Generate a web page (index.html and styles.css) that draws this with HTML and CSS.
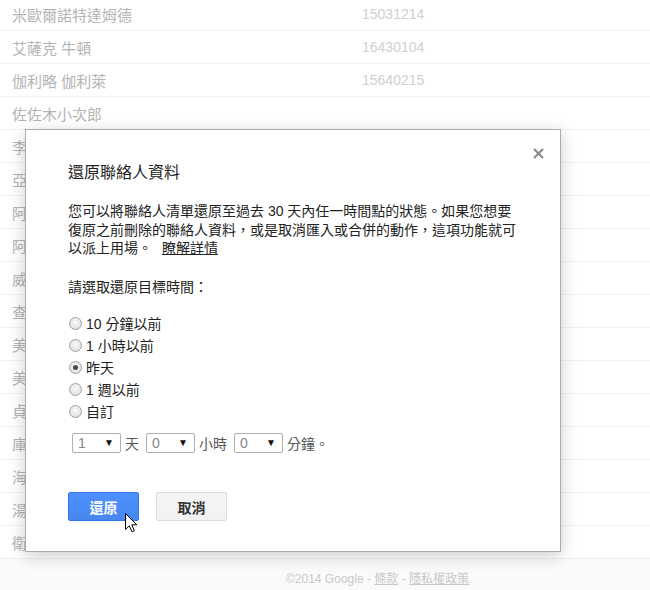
FILE: index.html
```html
<!DOCTYPE html>
<html lang="zh-Hant">
<head>
<meta charset="utf-8">
<title>還原聯絡人資料</title>
<link rel="stylesheet" href="styles.css">
</head>
<body>
<div class="page">
  <ul class="contacts">
    <li class="row"><span class="name">米歐爾諾特達姆德</span><span class="num">15031214</span></li>
    <li class="row"><span class="name">艾薩克 牛頓</span><span class="num">16430104</span></li>
    <li class="row"><span class="name">伽利略 伽利萊</span><span class="num">15640215</span></li>
    <li class="row"><span class="name">佐佐木小次郎</span><span class="num"></span></li>
    <li class="row"><span class="name">李奧納多 達文西</span><span class="num">14520415</span></li>
    <li class="row"><span class="name">亞里斯多德</span><span class="num"></span></li>
    <li class="row"><span class="name">阿基米德</span><span class="num"></span></li>
    <li class="row"><span class="name">阿爾伯特 愛因斯坦</span><span class="num">18790314</span></li>
    <li class="row"><span class="name">威廉 莎士比亞</span><span class="num">15640426</span></li>
    <li class="row"><span class="name">查爾斯 達爾文</span><span class="num">18090212</span></li>
    <li class="row"><span class="name">美空雲雀</span><span class="num">19370529</span></li>
    <li class="row"><span class="name">美智子</span><span class="num"></span></li>
    <li class="row"><span class="name">貞德</span><span class="num">14120106</span></li>
    <li class="row"><span class="name">庫克船長</span><span class="num">17281027</span></li>
    <li class="row"><span class="name">海倫 凱勒</span><span class="num">18800627</span></li>
    <li class="row"><span class="name">湯瑪斯 愛迪生</span><span class="num">18470211</span></li>
    <li class="row"><span class="name">衛斯理</span><span class="num"></span></li>
  </ul>
  <div class="footer">©2014 Google - <a href="#">條款</a> - <a href="#">隱私權政策</a></div>
</div>

<div class="dialog">
  <svg class="close" width="11" height="11" viewBox="0 0 11 11"><path d="M1 1 L10 10 M10 1 L1 10" stroke="#8c8c8c" stroke-width="2.2" fill="none"/></svg>
  <h1 class="title">還原聯絡人資料</h1>
  <p class="desc">您可以將聯絡人清單還原至過去 30 天內任一時間點的狀態。如果您想要復原之前刪除的聯絡人資料，或是取消匯入或合併的動作，這項功能就可以派上用場。 <a href="#" class="more">瞭解詳情</a></p>
  <p class="prompt">請選取還原目標時間：</p>
  <ul class="options">
    <li class="opt"><span class="radio"></span>10 分鐘以前</li>
    <li class="opt"><span class="radio"></span>1 小時以前</li>
    <li class="opt"><span class="radio checked"></span>昨天</li>
    <li class="opt"><span class="radio"></span>1 週以前</li>
    <li class="opt"><span class="radio"></span>自訂</li>
  </ul>
  <div class="custom">
    <div class="select"><span>1</span><span class="arrow">▼</span></div><span class="unit">天</span>
    <div class="select"><span>0</span><span class="arrow">▼</span></div><span class="unit">小時</span>
    <div class="select"><span>0</span><span class="arrow">▼</span></div><span class="unit last">分鐘。</span>
  </div>
  <div class="buttons">
    <button class="btn primary">還原</button>
    <button class="btn">取消</button>
  </div>
  <svg class="cursor" width="13" height="20" viewBox="0 0 13 20"><path d="M0.5 0.5 L0.5 16.5 L4.3 12.8 L7 18.9 L9.4 17.8 L6.8 11.8 L11.8 11.8 Z" fill="#fff" stroke="#000" stroke-width="1" stroke-linejoin="miter"/></svg>
</div>
</body>
</html>
```
FILE: styles.css
```css
* { box-sizing: border-box; }
html, body { margin: 0; padding: 0; background: #fff; }
body {
  font-family: "Liberation Sans", "Noto Sans CJK TC", sans-serif;
  width: 650px;
  height: 590px;
  overflow: hidden;
  position: relative;
}
.page { display: flex; flex-direction: column; }
.contacts { list-style: none; margin: -2px 0 0; padding: 0; }
.row {
  display: flex;
  align-items: center;
  height: 33px;
  padding-left: 12px;
  border-bottom: 1px solid #f1f1f1;
}
.name { width: 350px; font-size: 15px; color: #b4b4b4; }
.num { font-size: 14px; color: #d0d0d0; }
.footer {
  background: #fafafa;
  height: 40px;
  padding: 11px 0 0 286px;
  font-size: 12px;
  line-height: 18px;
  color: #c8c8c8;
}
.footer a { color: #c8c8c8; text-decoration: underline; }

.dialog {
  position: absolute;
  left: 25px;
  top: 129px;
  width: 536px;
  height: 423px;
  background: #fff;
  border: 1px solid #acacac;
  box-shadow: 0 4px 16px rgba(0,0,0,0.2);
  padding: 33px 42px 0;
  color: #222;
}
.close { position: absolute; top: 18px; right: 16px; }
.title { margin: 0; font-size: 16px; font-weight: normal; line-height: 20px; color: #222; }
.desc { margin: 19px 0 0; width: 450px; font-size: 14px; line-height: 18.5px; }
.more { color: #222; text-decoration: underline; margin-left: 6px; }
.prompt { margin: 20px 0 0; font-size: 14px; line-height: 18.5px; }
.options { list-style: none; margin: 16px 0 0; padding: 0; }
.opt { display: flex; align-items: center; height: 22px; font-size: 14px; }
.radio {
  width: 13px; height: 13px;
  margin: 0 4px 0 1px;
  border-radius: 50%;
  border: 1px solid #a2a2a2;
  background: radial-gradient(circle at 50% 40%, #fafafa 0%, #e6e6e6 60%, #d2d2d2 100%);
  display: flex; align-items: center; justify-content: center;
}
.radio.checked::after {
  content: "";
  width: 5px; height: 5px; border-radius: 50%;
  background: #4a4a4a;
}
.custom { display: flex; align-items: center; margin-top: 11px; padding-left: 4px; height: 20px; font-size: 14px; }
.select {
  width: 49px; height: 20px;
  border: 1px solid #b0b0b0;
  border-radius: 2px;
  display: flex; align-items: center; justify-content: space-between;
  padding: 0 6px 0 5px;
  color: #888;
  font-size: 14px;
  line-height: 18px;
}
.arrow { font-size: 10px; color: #111; }
.unit { margin: 0 7px 0 4px; color: #555; }
.unit.last { margin-right: 0; }
.buttons { display: flex; gap: 17px; margin-top: 39px; }
.btn {
  width: 71px; height: 29px;
  font-family: "Liberation Sans", "Noto Sans CJK TC", sans-serif;
  font-size: 14px; font-weight: bold;
  border-radius: 2px;
  border: 1px solid #dcdcdc;
  background: linear-gradient(#f5f5f5, #f1f1f1);
  color: #333;
  padding: 0;
}
.btn.primary {
  border-color: #3079ed;
  background: linear-gradient(#4d90fe, #4787ed);
  color: #fff;
}
.cursor { position: absolute; left: 99px; top: 383px; }
```
